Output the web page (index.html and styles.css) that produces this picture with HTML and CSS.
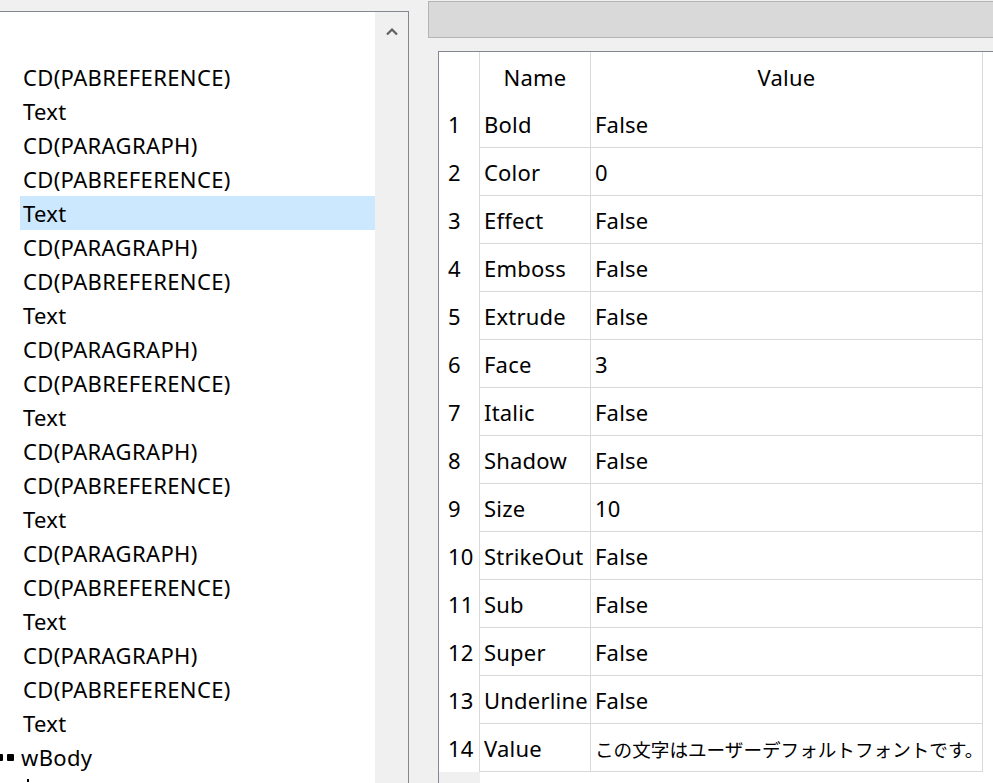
FILE: index.html
```html
<!DOCTYPE html>
<html lang="ja">
<head>
<meta charset="utf-8">
<title>Font properties</title>
<link rel="stylesheet" href="styles.css">
</head>
<body>
<div class="app">
  <div class="tree-panel">
    <ul class="tree">
      <li class="node">CD(PABREFERENCE)</li>
      <li class="node">Text</li>
      <li class="node">CD(PARAGRAPH)</li>
      <li class="node">CD(PABREFERENCE)</li>
      <li class="node selected">Text</li>
      <li class="node">CD(PARAGRAPH)</li>
      <li class="node">CD(PABREFERENCE)</li>
      <li class="node">Text</li>
      <li class="node">CD(PARAGRAPH)</li>
      <li class="node">CD(PABREFERENCE)</li>
      <li class="node">Text</li>
      <li class="node">CD(PARAGRAPH)</li>
      <li class="node">CD(PABREFERENCE)</li>
      <li class="node">Text</li>
      <li class="node">CD(PARAGRAPH)</li>
      <li class="node">CD(PABREFERENCE)</li>
      <li class="node">Text</li>
      <li class="node">CD(PARAGRAPH)</li>
      <li class="node">CD(PABREFERENCE)</li>
      <li class="node">Text</li>
      <li class="node parent"><span class="glyph"><i class="dot"></i><i class="dot"></i></span><span class="label">wBody</span></li>
      <li class="node child"><span class="tick"></span></li>
    </ul>
    <div class="scrollbar">
      <svg class="arrow" width="12" height="9" viewBox="0 0 12 9"><path d="M1 7.5 L6 2.5 L11 7.5" fill="none" stroke="#606060" stroke-width="2.2"/></svg>
    </div>
  </div>
  <div class="right">
    <div class="toolbar"></div>
    <div class="grid">
      <div class="cell rh head"></div>
      <div class="cell col head">Name</div>
      <div class="cell col head">Value</div>
      <div class="cell spare head"></div>

      <div class="cell rh">1</div><div class="cell col">Bold</div><div class="cell col">False</div><div class="cell spare"></div>
      <div class="cell rh">2</div><div class="cell col">Color</div><div class="cell col">0</div><div class="cell spare"></div>
      <div class="cell rh">3</div><div class="cell col">Effect</div><div class="cell col">False</div><div class="cell spare"></div>
      <div class="cell rh">4</div><div class="cell col">Emboss</div><div class="cell col">False</div><div class="cell spare"></div>
      <div class="cell rh">5</div><div class="cell col">Extrude</div><div class="cell col">False</div><div class="cell spare"></div>
      <div class="cell rh">6</div><div class="cell col">Face</div><div class="cell col">3</div><div class="cell spare"></div>
      <div class="cell rh">7</div><div class="cell col">Italic</div><div class="cell col">False</div><div class="cell spare"></div>
      <div class="cell rh">8</div><div class="cell col">Shadow</div><div class="cell col">False</div><div class="cell spare"></div>
      <div class="cell rh">9</div><div class="cell col">Size</div><div class="cell col">10</div><div class="cell spare"></div>
      <div class="cell rh">10</div><div class="cell col">StrikeOut</div><div class="cell col">False</div><div class="cell spare"></div>
      <div class="cell rh">11</div><div class="cell col">Sub</div><div class="cell col">False</div><div class="cell spare"></div>
      <div class="cell rh">12</div><div class="cell col">Super</div><div class="cell col">False</div><div class="cell spare"></div>
      <div class="cell rh">13</div><div class="cell col">Underline</div><div class="cell col">False</div><div class="cell spare"></div>
      <div class="cell rh">14</div><div class="cell col">Value</div><div class="cell col"><span class="jp">この文字はユーザーデフォルトフォントです。</span></div><div class="cell spare"></div>

      <div class="cell rh filler"></div><div class="cell blank"></div><div class="cell blank"></div><div class="cell blank"></div>
    </div>
  </div>
</div>
</body>
</html>
```

FILE: styles.css
```css
* { box-sizing: border-box; }
html, body { margin: 0; padding: 0; overflow: hidden; }
body {
  width: 993px;
  height: 783px;
  background: #f0f0f0;
  font-family: "Noto Sans", "Noto Sans CJK JP", sans-serif;
  font-size: 22px;
  color: #000;
}
.app {
  display: flex;
  align-items: flex-start;
  height: 783px;
  overflow: hidden;
}
.tree-panel {
  display: flex;
  width: 409px;
  height: 772px;
  margin-top: 11px;
  border-top: 1px solid #828790;
  border-right: 1px solid #828790;
  flex-shrink: 0;
}
.tree {
  list-style: none;
  margin: 0;
  padding: 48px 0 0 0;
  width: 375px;
  height: 771px;
  background: #fff;
  overflow: hidden;
}
.node {
  height: 34px;
  line-height: 35px;
  margin-left: 20px;
  padding-left: 3px;
  white-space: nowrap;
  letter-spacing: 0.35px;
}
.node.selected { background: #cce8ff; }
.node.parent {
  margin-left: 0;
  padding-left: 0;
  display: flex;
  align-items: center;
}
.glyph {
  display: flex;
  align-items: center;
  gap: 4px;
  width: 25px;
  margin-left: -4px;
  padding-top: 1px;
}
.dot {
  display: block;
  width: 7px;
  height: 7px;
  background: #000;
  border-radius: 1px;
}
.node.child { padding-left: 7px; }
.tick {
  display: inline-block;
  width: 2px;
  height: 3px;
  background: #000;
  vertical-align: top;
  margin-top: 5px;
}
.scrollbar {
  width: 33px;
  background: #f0f0f0;
  display: flex;
  justify-content: center;
  padding-top: 15px;
  padding-left: 1px;
}
.arrow { display: block; }

.right {
  flex: 1;
  margin-left: 19px;
  min-width: 0;
  height: 783px;
  overflow: hidden;
}
.toolbar {
  margin-top: 1px;
  height: 37px;
  width: 600px;
  background: #d9d9d9;
  border: 1px solid #b4b4b4;
}
.grid {
  margin-top: 13px;
  margin-left: 10px;
  width: 600px;
  height: 732px;
  overflow: hidden;
  border-left: 1px solid #828790;
  border-top: 1px solid #828790;
  background: #fff;
  display: grid;
  grid-template-columns: 41px 111px 392px 1fr;
  grid-auto-rows: 48px;
  align-content: start;
}
.cell {
  white-space: nowrap;
  overflow: hidden;
  line-height: 48px;
  letter-spacing: 0.2px;
}
.rh {
  border-right: 1px solid #d9d9d9;
  padding-left: 9px;
}
.col {
  border-right: 1px solid #d9d9d9;
  border-bottom: 1px solid #d9d9d9;
  padding-left: 4px;
}
.head.col {
  border-bottom: none;
  text-align: center;
  padding-left: 0;
  line-height: 51px;
}
.jp {
  font-family: "Noto Sans CJK JP", sans-serif;
  font-size: 18.6px;
  letter-spacing: 0;
}
.filler {
  background: #f0f0f0;
  border-right: none;
}
.blank { background: #fff; }
```
